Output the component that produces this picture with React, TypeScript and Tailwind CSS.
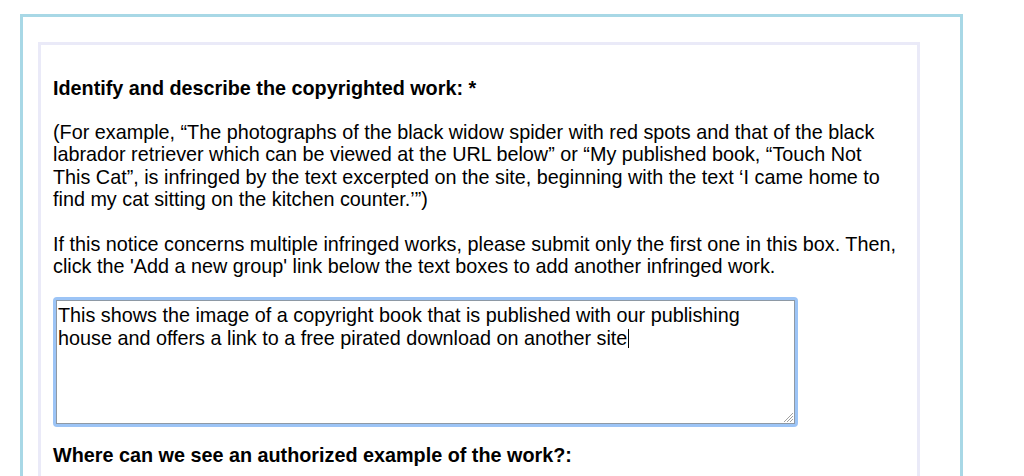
export default function App() {
  return (
    <div className="h-[476px] w-[1024px] overflow-hidden bg-white font-['Liberation_Sans',Arial,sans-serif] text-black">
      <div className="ml-5 mt-[14px] w-[943px] border-[3px] border-[#a8d8e6] pl-[15px] pr-[40px] pt-[25px] pb-10">
        <div className="border-[3px] border-[#eaeaf8] pl-[12px] pr-[20px] pt-[32px] pb-10">
          {/* Titel */}
          <p className="text-[19.8px] leading-[22px] font-bold">Identify and describe the copyrighted work: *</p>

          <p className="mt-[22px] text-[19.8px] leading-[22.3px]">
            (For example, “The photographs of the black widow spider with red spots and that of the black labrador retriever which can be viewed at the URL below” or “My published book, “Touch Not This Cat”, is infringed by the text excerpted on the site, beginning with the text ‘I came home to find my cat sitting on the kitchen counter.’”)
          </p>

          <p className="mt-[23px] text-[19.8px] leading-[22.3px]">
            If this notice concerns multiple infringed works, please submit only the first one in this box. Then, click the 'Add a new group' link below the text boxes to add another infringed work.
          </p>

          {/* Textfeld mit Fokusrahmen */}
          <div className="mt-[19px] w-[745px] rounded-[4px] border-[3px] border-[#9cc4f6]">
            <div className="relative h-[124px] w-full border border-[#8e99a5] px-[1px] pt-[3px] text-[19.8px] leading-[22px]">
              This shows the image of a copyright book that is published with our publishing house and offers a link to a free pirated download on another site
              <span className="ml-[1px] inline-block h-[19px] w-px translate-y-[3px] bg-black" />
              <svg viewBox="0 0 12 12" className="absolute right-0 bottom-0 h-3 w-3" aria-hidden>
                <path d="M11 2 2 11M11 5 5 11M11 8 8 11" stroke="#a0a0a0" strokeWidth={1} fill="none" />
              </svg>
            </div>
          </div>

          <p className="mt-[17px] text-[19.8px] leading-[22px] font-bold">Where can we see an authorized example of the work?:</p>
        </div>
      </div>
    </div>
  );
}
